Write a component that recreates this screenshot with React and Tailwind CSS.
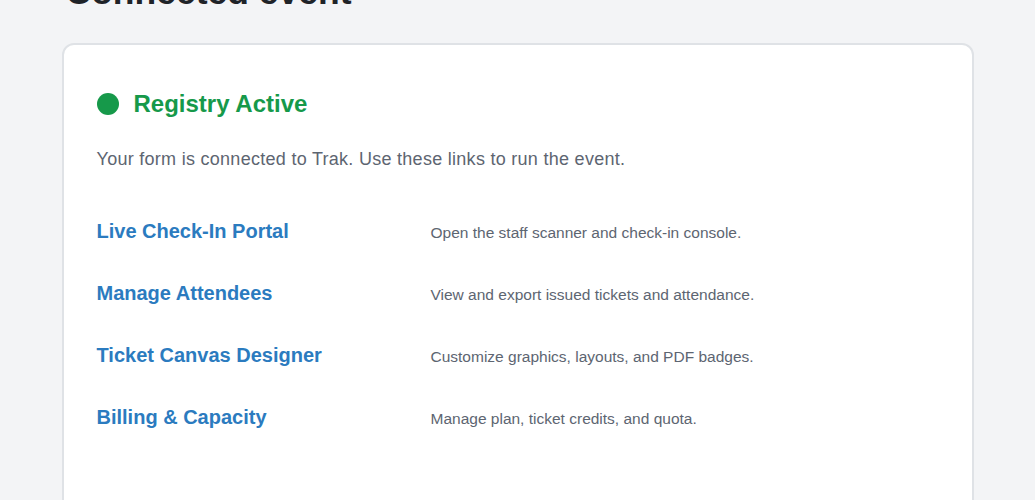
import React from 'react';

const links = [
  { title: 'Live Check-In Portal', desc: 'Open the staff scanner and check-in console.' },
  { title: 'Manage Attendees', desc: 'View and export issued tickets and attendance.' },
  { title: 'Ticket Canvas Designer', desc: 'Customize graphics, layouts, and PDF badges.' },
  { title: 'Billing & Capacity', desc: 'Manage plan, ticket credits, and quota.' },
];

const App = () => {
  return (
    <div className="min-h-screen bg-[#f3f4f6] font-['Liberation_Sans',Arial,sans-serif] overflow-hidden">
      <div className="w-[912px] mx-auto -mt-[28px] pb-10">
        <h1 className="text-[35.5px] leading-10 font-bold text-[#1f2328] px-1 mb-[31px]">Connected event</h1>

        <div className="bg-white border-2 border-[#dfe2e6] rounded-xl px-[33px] pt-[43px] pb-28">
          <div className="flex items-center gap-[15px] h-8">
            <span className="w-[22px] h-[22px] rounded-full bg-[#16994a]" />
            <h2 className="text-[24px] leading-8 font-bold text-[#16994a]">Registry Active</h2>
          </div>

          <p className="mt-[26px] text-[18px] leading-[26px] tracking-[0.28px] text-[#5d6571]">
            Your form is connected to Trak. Use these links to run the event.
          </p>

          <div className="mt-[45px] flex flex-col gap-[34px]">
            {links.map((link) => (
              <div key={link.title} className="grid grid-cols-[334px_1fr] items-baseline">
                <a href="#" className="text-[20px] leading-7 font-bold text-[#2b7bbf] hover:underline">
                  {link.title}
                </a>
                <span className="text-[15.5px] leading-6 text-[#5d6571]">{link.desc}</span>
              </div>
            ))}
          </div>
        </div>
      </div>
    </div>
  );
};

export default App;
